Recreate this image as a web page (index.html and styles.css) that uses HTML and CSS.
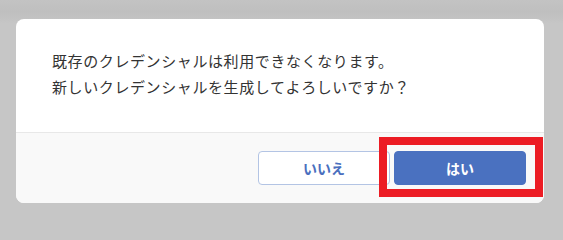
FILE: index.html
```html
<!DOCTYPE html>
<html lang="ja">
<head>
<meta charset="utf-8">
<link rel="stylesheet" href="styles.css">
</head>
<body>
<div class="backdrop">
  <div class="dialog">
    <div class="dialog-body">
      <p class="msg">既存のクレデンシャルは利用できなくなります。</p>
      <p class="msg">新しいクレデンシャルを生成してよろしいですか？</p>
    </div>
    <div class="dialog-footer">
      <button class="btn btn-secondary">いいえ</button>
      <button class="btn btn-primary">はい</button>
      <div class="highlight"></div>
    </div>
  </div>
</div>
</body>
</html>
```
FILE: styles.css
```css
html, body {
  margin: 0;
  padding: 0;
  width: 563px;
  height: 227px;
  overflow: hidden;
}
body {
  font-family: "Noto Sans CJK JP", "Noto Sans", sans-serif;
  background: #c6c6c6;
}
.backdrop {
  height: 227px;
  box-sizing: border-box;
  padding: 19px 0 0 16px;
  background: linear-gradient(to bottom, #c3c3c3 0px, #bfbfbf 12px, #c6c6c6 24px, #c6c6c6 100%);
}
.dialog {
  width: 528px;
  background: #ffffff;
  border-radius: 8px;
  overflow: hidden;
}
.dialog-body {
  padding: 29px 36px 32px 36px;
  border-bottom: 1px solid #e8e8e8;
}
.msg {
  margin: 0;
  font-size: 15px;
  line-height: 26px;
  letter-spacing: 0.6px;
  color: #333333;
}
.dialog-footer {
  position: relative;
  background: #f9f9f9;
  display: flex;
  justify-content: flex-end;
  gap: 4px;
  padding: 18px 18px 18px 0;
}
.btn {
  width: 132px;
  height: 34px;
  border-radius: 4px;
  font-family: "Noto Sans CJK JP", "Noto Sans", sans-serif;
  font-size: 14px;
  font-weight: 700;
  padding: 0;
  cursor: pointer;
}
.btn-secondary {
  background: #ffffff;
  border: 1px solid #b3c4e4;
  color: #4a6fbe;
}
.btn-primary {
  background: #4a71c0;
  border: 1px solid #4a71c0;
  color: #ffffff;
}
.highlight {
  position: absolute;
  left: 363px;
  top: 4px;
  width: 164px;
  height: 60px;
  box-sizing: border-box;
  border: 8px solid #ec1c24;
  pointer-events: none;
}
```
